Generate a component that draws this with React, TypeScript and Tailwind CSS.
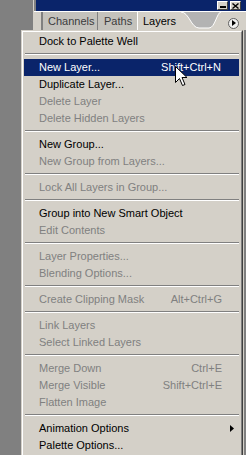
import React from "react";

type Item =
  | { label: string; shortcut?: string; disabled?: boolean; active?: boolean; submenu?: boolean }
  | "sep";

const items: Item[] = [
  { label: "Dock to Palette Well" },
  "sep",
  { label: "New Layer...", shortcut: "Shift+Ctrl+N", active: true },
  { label: "Duplicate Layer..." },
  { label: "Delete Layer", disabled: true },
  { label: "Delete Hidden Layers", disabled: true },
  "sep",
  { label: "New Group..." },
  { label: "New Group from Layers...", disabled: true },
  "sep",
  { label: "Lock All Layers in Group...", disabled: true },
  "sep",
  { label: "Group into New Smart Object" },
  { label: "Edit Contents", disabled: true },
  "sep",
  { label: "Layer Properties...", disabled: true },
  { label: "Blending Options...", disabled: true },
  "sep",
  { label: "Create Clipping Mask", shortcut: "Alt+Ctrl+G", disabled: true },
  "sep",
  { label: "Link Layers", disabled: true },
  { label: "Select Linked Layers", disabled: true },
  "sep",
  { label: "Merge Down", shortcut: "Ctrl+E", disabled: true },
  { label: "Merge Visible", shortcut: "Shift+Ctrl+E", disabled: true },
  { label: "Flatten Image", disabled: true },
  "sep",
  { label: "Animation Options", submenu: true },
  { label: "Palette Options..." },
];

const Separator = () => (
  <div className="pt-[3px] pb-[4px] px-[1px]">
    <div className="h-[1px] bg-[#808080]" />
    <div className="h-[1px] bg-white" />
  </div>
);

const WinButton = ({ kind }: { kind: "min" | "close" }) => (
  <div className="w-[11px] h-[9px] bg-[#d4d0c8] border-t border-l border-white border-b border-r border-b-[#404040] border-r-[#404040] flex items-center justify-center">
    {kind === "min" ? (
      <div className="w-[6px] h-[2px] bg-black mt-[3px]" />
    ) : (
      <svg width="7" height="6" viewBox="0 0 7 6">
        <path d="M0.5 0.5 L6.5 5.5 M6.5 0.5 L0.5 5.5" stroke="black" strokeWidth="1.4" />
      </svg>
    )}
  </div>
);

export default function App() {
  return (
    <div
      className="relative w-[246px] h-[455px] overflow-hidden bg-[#808080] flex"
      style={{ fontFamily: '"Liberation Sans", Arial, sans-serif' }}
    >
      <div className="w-[33px] shrink-0" />

      {/* palette window behind the menu */}
      <div className="flex-1 flex flex-col border-l border-[#d4d0c8]">
        <div className="h-[11px] bg-[#0a246a] ml-[2px] flex items-center justify-end gap-[2px] pr-[5px]">
          <WinButton kind="min" />
          <WinButton kind="close" />
        </div>

        {/* tab row */}
        <div className="h-[19px] bg-[#d4d0c8] border-t border-white flex items-stretch text-[11px] leading-none">
          <div className="w-[7px]" />
          <div className="w-[56px] bg-[#c4c2bc] border-l-2 border-[#808080] flex items-center pl-[5px] text-[#3c3c3c]">
            Channels
          </div>
          <div className="w-[40px] bg-[#c4c2bc] border-l border-[#808080] flex items-center pl-[6px] text-[#3c3c3c]">
            Paths
          </div>
          <div className="w-[44px] bg-[#d4d0c8] border-l border-white flex items-center pl-[5px] text-black">
            Layers
          </div>
          <svg width="40" height="18" viewBox="0 0 40 18" className="shrink-0">
            <path d="M0 0 C8 0 10 16 18 16 L28 16 C34 16 36 0 40 0 Z" fill="#b3b3b3" />
            <path d="M0 0 C8 0 10 16 18 16 L28 16 C34 16 36 0 40 0" fill="none" stroke="white" strokeWidth="1" />
          </svg>
          <div className="flex-1 flex items-center justify-center">
            <div className="w-[11px] h-[11px] rounded-full bg-[#f0f0f0] border border-[#606060] flex items-center justify-center mt-[4px]">
              <svg width="4" height="6" viewBox="0 0 4 6">
                <path d="M0 0 L4 3 L0 6 Z" fill="black" />
              </svg>
            </div>
          </div>
        </div>

        <div className="flex-1 bg-[#d4d0c8] border-r-[2px] border-[#808080]" />
      </div>

      {/* dropdown menu */}
      <div className="absolute left-[21px] top-[30px] w-[222px] border border-t-[#d4d0c8] border-l-[#d4d0c8] border-b-[#404040] border-r-[#404040]">
        <div className="bg-[#d4d0c8] border border-t-white border-l-white border-b-[#808080] border-r-[#808080] p-[1px] text-[11px]">
          {items.map((it, i) =>
            it === "sep" ? (
              <Separator key={i} />
            ) : (
              <div
                key={i}
                className={`h-[17px] leading-[17px] flex items-center pl-[15px] whitespace-nowrap ${
                  it.active ? "bg-[#0a246a] text-white mr-[1px]" : it.disabled ? "text-[#808080]" : "text-black"
                }`}
              >
                <span className="flex-1">{it.label}</span>
                {it.shortcut && <span>{it.shortcut}</span>}
                <span className="w-[18px] h-full flex items-center pl-[8px]">
                  {it.submenu && (
                    <svg width="4" height="7" viewBox="0 0 4 7">
                      <path d="M0 0 L4 3.5 L0 7 Z" fill="black" />
                    </svg>
                  )}
                </span>
              </div>
            )
          )}
        </div>
      </div>

      {/* mouse pointer */}
      <svg
        width="13"
        height="21"
        viewBox="0 0 13 21"
        className="absolute left-[175px] top-[66px]"
      >
        <path
          d="M0.5 0.5 L0.5 16.5 L4.5 12.5 L7.5 19.5 L10 18.5 L7 11.5 L12 11.5 Z"
          fill="white"
          stroke="black"
          strokeWidth="1"
          strokeLinejoin="miter"
        />
      </svg>
    </div>
  );
}
